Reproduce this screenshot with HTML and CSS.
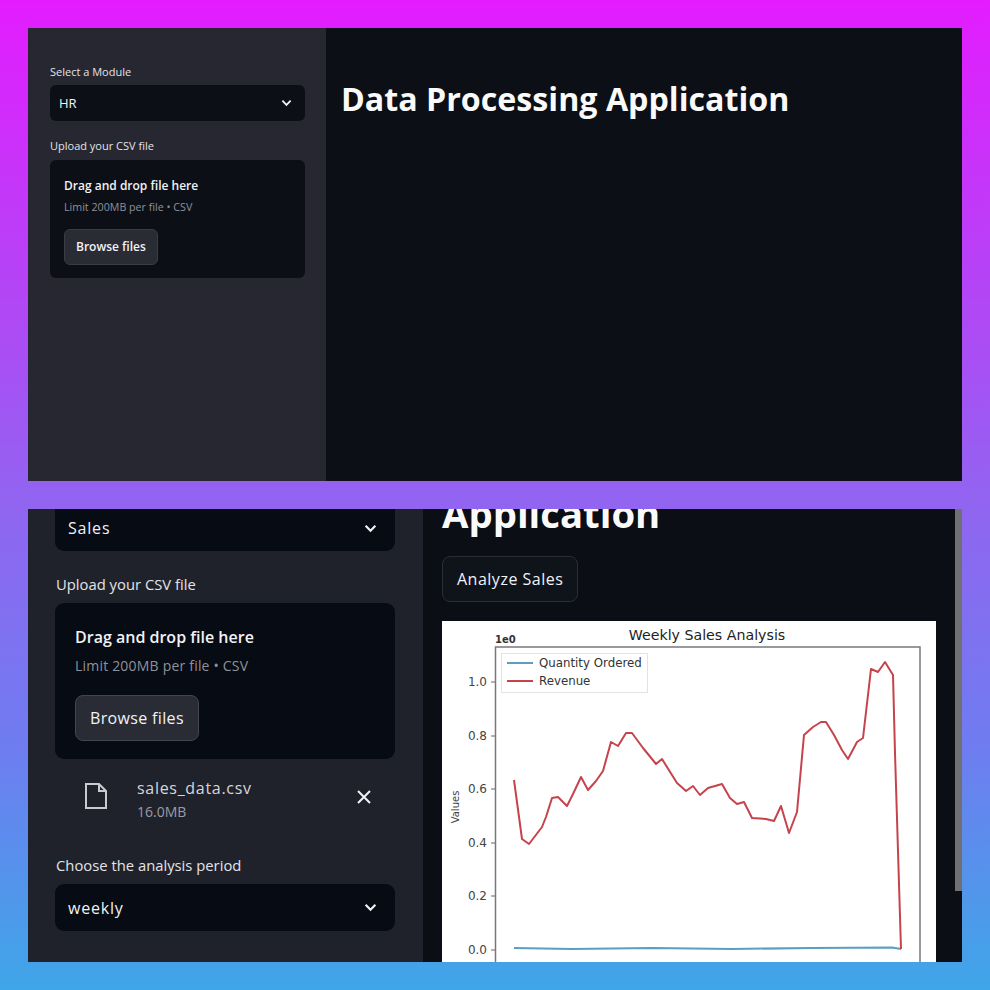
FILE: index.html
```html
<!DOCTYPE html>
<html lang="en">
<head>
    <meta charset="UTF-8">
    <title>Data Processing Application</title>
    <link rel="stylesheet" href="styles.css">
</head>
<body>
    <!-- first screenshot: HR module, nothing uploaded -->
    <section class="shot">
        <aside class="side side-small">
            <div class="label">Select a Module</div>
            <div class="select">
                <span>HR</span>
                <svg viewBox="0 0 12 8"><path d="M1.5 1.5 6 6l4.5-4.5"/></svg>
            </div>
            <div class="label label-next">Upload your CSV file</div>
            <div class="drop">
                <div class="drop-title">Drag and drop file here</div>
                <div class="drop-limit">Limit 200MB per file • CSV</div>
                <div class="browse">Browse files</div>
            </div>
        </aside>
        <main class="main main-small">
            <h1>Data Processing Application</h1>
        </main>
    </section>

    <!-- second screenshot: Sales module, scrolled down -->
    <section class="shot">
        <aside class="side side-big">
            <div class="select select-cut">
                <span>Sales</span>
                <svg viewBox="0 0 12 8"><path d="M1.5 1.5 6 6l4.5-4.5"/></svg>
            </div>
            <div class="label label-next">Upload your CSV file</div>
            <div class="drop">
                <div class="drop-title">Drag and drop file here</div>
                <div class="drop-limit">Limit 200MB per file • CSV</div>
                <div class="browse">Browse files</div>
            </div>
            <div class="file">
                <svg class="file-icon" viewBox="0 0 24 28"><path d="M2 2h13l7 7v17H2z"/><path d="M15 2v7h7"/></svg>
                <div class="file-text">
                    <div class="file-name">sales_data.csv</div>
                    <div class="file-size">16.0MB</div>
                </div>
                <svg class="file-close" viewBox="0 0 14 14"><path d="M1 1l12 12M13 1 1 13"/></svg>
            </div>
            <div class="label label-period">Choose the analysis period</div>
            <div class="select">
                <span>weekly</span>
                <svg viewBox="0 0 12 8"><path d="M1.5 1.5 6 6l4.5-4.5"/></svg>
            </div>
        </aside>
        <main class="main main-big">
            <h2>Application</h2>
            <div class="analyze">Analyze Sales</div>
            <div class="chart">
                <svg viewBox="0 0 494 341" width="494" height="341">
                    <text class="chart-title" x="265" y="19" text-anchor="middle">Weekly Sales Analysis</text>
                    <text class="chart-exp" x="53" y="22">1e0</text>
                    <rect class="axes" x="53.5" y="26" width="424.5" height="330"/>
                    <g class="ticks">
                        <path d="M49 61h4M49 115h4M49 168h4M49 222h4M49 275h4M49 329h4"/>
                    </g>
                    <g class="tick-labels">
                        <text x="45" y="65">1.0</text>
                        <text x="45" y="119">0.8</text>
                        <text x="45" y="172">0.6</text>
                        <text x="45" y="226">0.4</text>
                        <text x="45" y="279">0.2</text>
                        <text x="45" y="333">0.0</text>
                    </g>
                    <text class="y-label" transform="translate(17 186) rotate(-90)" text-anchor="middle">Values</text>
                    <polyline class="line-qty" points="72,327 130,328 210,327 290,328 370,327 450,326.5 459,328"/>
                    <polyline class="line-rev" points="72,159 80,218 87,223 100,206 104,196 110,177 116,176 125,185 131,173 139,156 146,169 154,160 161,150 169,121 176,125 184,112 190,112 201,127 214,143 220,138 235,162 244,170 251,165 258,174 266,167 280,163 288,177 295,183 302,181 310,197 324,198 332,200 339,185 347,212 355,191 362,114 371,106 379,101 384,101 392,114 400,129 406,138 415,121 421,117 429,48 436,51 443,41 451,54 453,132 459,328"/>
                    <rect class="legend" x="59.5" y="32.5" width="146" height="39"/>
                    <line class="line-qty" x1="65" y1="42" x2="91" y2="42"/>
                    <line class="line-rev" x1="65" y1="60" x2="91" y2="60"/>
                    <text class="legend-text" x="97" y="46">Quantity Ordered</text>
                    <text class="legend-text" x="97" y="64">Revenue</text>
                </svg>
            </div>
            <div class="scrollbar"></div>
        </main>
    </section>
</body>
</html>
```

FILE: styles.css
```css
html, body {
    margin: 0;
    height: 990px;
}

body {
    box-sizing: border-box;
    padding: 28px;
    display: flex;
    flex-direction: column;
    gap: 28px;
    overflow: hidden;
    font-family: "Open Sans", "Noto Sans", sans-serif;
    color: #f0f2f6;
    background: linear-gradient(180deg, #e31cff 0%, #b246f5 30%, #8f66f0 52%, #6f7cf0 75%, #3fa6e8 100%);
}

.shot {
    display: flex;
    height: 453px;
    overflow: hidden;
    background: #0b0e14;
}

/* sidebar */
.side {
    box-sizing: border-box;
    flex: none;
    background: #262730;
}

.side-small {
    width: 298px;
    padding: 36px 21px 0 22px;
    font-size: 11px;
}

.side-big {
    width: 395px;
    padding: 0 28px 0 27px;
    font-size: 14.8px;
    background: #20222b;
}

.label {
    font-weight: 500;
    line-height: 15px;
    color: #e3e4e8;
}

.select {
    display: flex;
    justify-content: space-between;
    align-items: center;
    margin-top: 6px;
    padding: 0 13px 0 9px;
    height: 36px;
    border-radius: 6px;
    background: #0d0f16;
    font-size: 13px;
    font-weight: 500;
}

.select svg {
    width: 11px;
    height: 8px;
    fill: none;
    stroke: #f0f2f6;
    stroke-width: 2;
}

.side-big .select {
    height: 47px;
    margin-top: 9px;
    padding: 0 18px 0 13px;
    border-radius: 9px;
    font-size: 16px;
    letter-spacing: 0.8px;
    background: #070b13;
}

.side-big .select svg {
    width: 13px;
    height: 9px;
}

.side-big .select-cut {
    height: 42px;
    margin-top: 0;
    border-radius: 0 0 9px 9px;
    padding-bottom: 4px;
    box-sizing: border-box;
}

.label-next {
    margin-top: 17px;
}

.side-big .label {
    padding-left: 1px;
    line-height: 20px;
}

.side-big .label-next {
    margin-top: 23px;
}

.drop {
    box-sizing: border-box;
    margin-top: 7px;
    height: 118px;
    padding: 18px 14px 0;
    border-radius: 6px;
    background: #0d0f16;
}

.side-big .drop {
    height: 156px;
    margin-top: 9px;
    padding: 23px 20px 0;
    border-radius: 9px;
    background: #070b13;
}

.drop-title {
    font-size: 12px;
    font-weight: 600;
    line-height: 16px;
}

.drop-limit {
    margin-top: 6px;
    font-size: 10.7px;
    line-height: 14px;
    color: #8f919a;
}

.browse {
    display: inline-block;
    margin-top: 15px;
    padding: 0 11px;
    line-height: 34px;
    border-radius: 6px;
    border: 1px solid #3a3c46;
    background: #2a2c35;
    font-size: 12px;
    font-weight: 600;
}

.side-big .drop-title {
    font-size: 16px;
    line-height: 22px;
}

.side-big .drop-limit {
    margin-top: 8px;
    font-size: 14px;
    letter-spacing: 0.2px;
    line-height: 20px;
}

.side-big .browse {
    margin-top: 19px;
    padding: 0 14px;
    line-height: 44px;
    border-radius: 8px;
    border-color: #43454f;
    font-size: 16px;
    letter-spacing: 0.35px;
    font-weight: 500;
}

/* uploaded file row */
.file {
    display: flex;
    align-items: center;
    height: 74px;
    padding-left: 29px;
}

.file-icon {
    width: 24px;
    height: 28px;
    fill: none;
    stroke: #c8cad0;
    stroke-width: 2;
}

.file-text {
    margin-left: 29px;
    padding-top: 5px;
}

.file-name {
    font-size: 16px;
    letter-spacing: 0.7px;
    line-height: 22px;
    color: #d5d7dc;
}

.file-size {
    margin-top: 4px;
    font-size: 14px;
    line-height: 18px;
    color: #9a9ca5;
}

.file-close {
    width: 14px;
    height: 14px;
    margin-left: auto;
    margin-right: 24px;
    margin-top: 2px;
    fill: none;
    stroke: #f0f2f6;
    stroke-width: 2;
}

.side-big .label-period {
    margin-top: 22px;
}

/* main area */
.main {
    flex: 1;
    min-width: 0;
}

.main-small {
    padding: 49px 15px 0;
    background: #0c0f15;
}

h1 {
    margin: 0;
    font-size: 32.2px;
    line-height: 44px;
    font-weight: 700;
    color: #fafafa;
}

.main-big {
    position: relative;
    padding: 0 19px;
}

h2 {
    margin: -22px 0 0;
    font-size: 38.3px;
    line-height: 52px;
    font-weight: 700;
    color: #fafafa;
}

.analyze {
    display: inline-block;
    margin-top: 17px;
    padding: 0 14px;
    line-height: 44px;
    border-radius: 8px;
    border: 1px solid #2a2d35;
    background: #0f131a;
    font-size: 16px;
    letter-spacing: 0.5px;
    font-weight: 500;
}

.chart {
    margin-top: 19px;
    width: 494px;
    height: 341px;
    background: #fff;
}

.chart svg {
    display: block;
    font-family: "DejaVu Sans", sans-serif;
}

.chart-title {
    font-size: 14.2px;
    fill: #222;
}

.chart-exp {
    font-size: 10px;
    font-weight: 700;
    fill: #333;
}

.axes {
    fill: none;
    stroke: #77777f;
    stroke-width: 1.5;
}

.ticks path {
    fill: none;
    stroke: #666;
}

.tick-labels text {
    font-size: 12px;
    fill: #444;
    text-anchor: end;
}

.y-label {
    font-size: 10px;
    fill: #444;
}

.line-qty, .line-rev {
    fill: none;
    stroke-width: 2;
    stroke-linejoin: round;
}

.line-qty {
    stroke: #5a9fc0;
}

.line-rev {
    stroke: #c5444c;
}

.legend {
    fill: #fff;
    stroke: #e2e2e8;
}

.legend-text {
    font-size: 11.8px;
    fill: #333;
}

.scrollbar {
    position: absolute;
    top: 0;
    right: 0;
    width: 7px;
    height: 382px;
    background: #6f6f74;
}
```
